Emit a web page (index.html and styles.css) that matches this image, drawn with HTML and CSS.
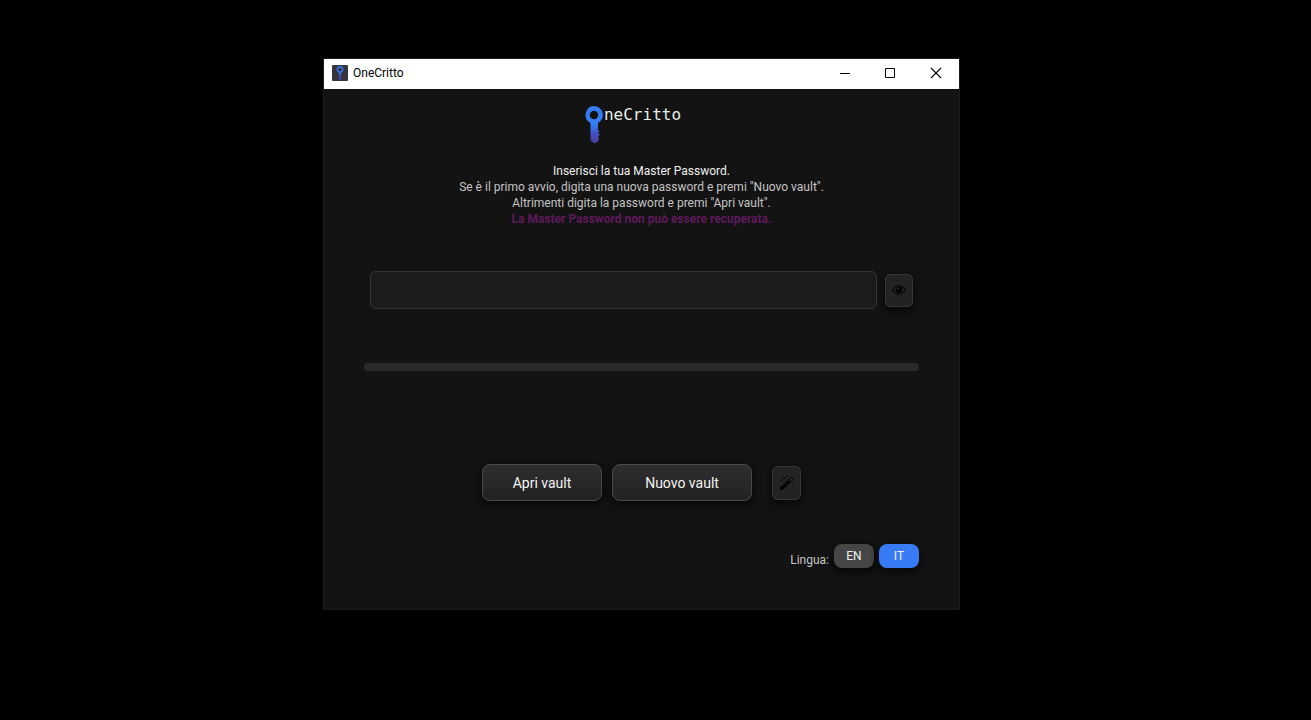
FILE: index.html
```html
<!DOCTYPE html>
<html lang="it">
<head>
    <meta charset="UTF-8">
    <meta name="viewport" content="width=device-width, initial-scale=1.0">
    <title>OneCritto</title>
    <link rel="stylesheet" href="styles.css">
</head>
<body>
    <div class="window">
        <!-- title bar -->
        <header class="titlebar">
            <svg class="app-icon" viewBox="0 0 16 16" width="16" height="16">
                <rect width="16" height="16" rx="1" fill="#333539"/>
                <circle cx="8" cy="4.5" r="2.6" fill="none" stroke="#2f6fec" stroke-width="1.6"/>
                <path d="M8 7v3" stroke="#2f6fec" stroke-width="2"/>
                <path d="M8 10v5M8 12.500h2" stroke="#4340a8" stroke-width="2"/>
            </svg>
            <span class="app-name">OneCritto</span>
            <button class="win-btn" type="button" aria-label="Riduci">
                <svg viewBox="0 0 12 12" width="12" height="12"><path d="M2 6.500h10" stroke="#000"/></svg>
            </button>
            <button class="win-btn" type="button" aria-label="Ingrandisci">
                <svg viewBox="0 0 12 12" width="12" height="12"><path d="M1.500 1.500h9v9h-9z" fill="none" stroke="#000"/></svg>
            </button>
            <button class="win-btn" type="button" aria-label="Chiudi">
                <svg viewBox="0 0 12 12" width="12" height="12"><path d="M1 1l10 10M11 1L1 11" stroke="#000" stroke-width="1.1"/></svg>
            </button>
        </header>

        <main class="content">
            <div class="logo">
                <svg viewBox="0 0 20 38" width="20" height="38">
                    <defs>
                        <linearGradient id="key" x1="0" y1="0" x2="0" y2="1">
                            <stop offset="0.5" stop-color="#377cf4"/>
                            <stop offset="0.75" stop-color="#4250c0"/>
                            <stop offset="1" stop-color="#4a3a9c"/>
                        </linearGradient>
                    </defs>
                    <path fill="url(#key)" fill-rule="evenodd" d="M10 0a9 9 0 0 1 4 17v7l1.500 1.500-1.500 1.500 2 1.500-2 2.500 1 2-1 2.500-3.500 2-4-3V17A9 9 0 0 1 10 0zM10 4.800a4.200 4.200 0 1 0 0 8.400a4.200 4.200 0 0 0 0-8.400z"/>
                </svg>
                <span>neCritto</span>
            </div>

            <div class="intro">
                <p class="lead">Inserisci la tua Master Password.</p>
                <p>Se è il primo avvio, digita una nuova password e premi "Nuovo vault".</p>
                <p>Altrimenti digita la password e premi "Apri vault".</p>
                <p class="warning">La Master Password non può essere recuperata.</p>
            </div>

            <div class="password-row">
                <input class="password" type="password" aria-label="Master Password">
                <button class="icon-btn" type="button" aria-label="Mostra password">
                    <svg viewBox="0 0 14 10" width="14" height="10">
                        <path d="M.5 5Q7-3.500 13.500 5Q7 13.500.5 5z" fill="none" stroke="#050505" stroke-width="1.200"/>
                        <circle cx="7" cy="4.800" r="3.200" fill="#050505"/>
                        <circle cx="6" cy="3.500" r=".9" fill="#333"/>
                    </svg>
                </button>
            </div>

            <div class="strength"></div>

            <div class="actions">
                <button class="btn open" type="button">Apri vault</button>
                <button class="btn new" type="button">Nuovo vault</button>
                <button class="icon-btn wand" type="button" aria-label="Genera password">
                    <svg viewBox="0 0 16 16" width="16" height="16">
                        <path d="M2.500 13.500L13 4" stroke="#050505" stroke-width="3.400" stroke-linecap="round"/>
                        <path d="M11 5.800l2-1.800" stroke="#333" stroke-width="1.200" stroke-linecap="round"/>
                        <path d="M5 1l.6 1.400L7 3l-1.400.6L5 5l-.6-1.400L3 3l1.400-.6zM2 4l.4.8.8.4-.8.4-.4.8-.4-.8-.8-.4.8-.4zM8.500 0l.4.8.8.4-.8.4-.4.8-.4-.8-.8-.4.8-.4zM14 8l.4.8.8.4-.8.4-.4.8-.4-.8-.8-.4.8-.4z" fill="#050505"/>
                    </svg>
                </button>
            </div>

            <div class="language">
                <span class="language-label">Lingua:</span>
                <button class="lang" type="button">EN</button>
                <button class="lang active" type="button">IT</button>
            </div>
        </main>
    </div>
</body>
</html>
```
FILE: styles.css
```css
*{
    box-sizing: border-box;
}
body{
    margin: 0;
    padding: 58px 28px 58px 0;
    background-color: #000;
    font-family: Roboto, "Noto Sans", sans-serif;
    font-size: 12px;
    line-height: 16px;
}
button{
    padding: 0;
    border: 0;
    font: inherit;
    color: inherit;
}
.window{
    width: 100%;
    max-width: 637px;
    margin: 0 auto;
    border: 1px solid #1c1c1c;
    background-color: #131313;
    color: #c4c4c4;
}
/* title bar */
.titlebar{
    display: flex;
    align-items: center;
    height: 30px;
    padding: 0 0 2px 8px;
    background-color: #fff;
    color: #000;
}
.app-name{
    flex: 1;
    margin-left: 5px;
}
.win-btn{
    display: flex;
    align-items: center;
    justify-content: center;
    width: 46px;
    height: 28px;
    background: none;
}
/* content */
.content{
    padding: 17px 40px 41px;
}
.logo{
    display: flex;
    justify-content: center;
    height: 38px;
    padding-right: 18px;
    color: #e8efe8;
    font-family: "DejaVu Sans Mono", monospace;
    font-size: 16px;
    line-height: 18px;
}
.intro{
    margin-top: 19px;
    text-align: center;
}
.intro p{
    margin: 0;
}
.intro .lead{
    color: #f0f0f0;
}
.intro .warning{
    color: #5e1a5c;
    font-weight: bold;
}
.password-row{
    display: flex;
    align-items: center;
    gap: 8px;
    margin-top: 44px;
    padding: 0 6px;
}
.password{
    flex: 1;
    min-width: 0;
    height: 38px;
    padding: 0 12px;
    border: 1px solid #363636;
    border-radius: 6px;
    background-color: #1c1c1c;
    color: #f0f0f0;
    font: inherit;
}
.icon-btn{
    display: flex;
    align-items: center;
    justify-content: center;
    width: 28px;
    height: 33px;
    border: 1px solid #363636;
    border-radius: 5px;
    background-color: #232323;
    box-shadow: 0 3px 6px 2px #0a0a0a;
}
.strength{
    height: 8px;
    margin-top: 54px;
    border-radius: 4px;
    background-color: #2a2a2a;
}
.actions{
    display: flex;
    align-items: center;
    justify-content: center;
    gap: 10px;
    margin-top: 93px;
}
.btn{
    height: 37px;
    border: 1px solid #4a4a4a;
    border-radius: 8px;
    background: linear-gradient(#2e2e2e, #222);
    box-shadow: 0 3px 6px 2px #0a0a0a;
    color: #f4f4f4;
    font-size: 14px;
}
.open{
    width: 120px;
}
.new{
    width: 140px;
}
.wand{
    width: 29px;
    height: 34px;
    margin-left: 10px;
}
.language{
    display: flex;
    align-items: center;
    justify-content: flex-end;
    gap: 5px;
    margin-top: 43px;
}
.language-label{
    padding-top: 8px;
}
.lang{
    width: 40px;
    height: 24px;
    border-radius: 8px;
    background-color: #464646;
    box-shadow: 0 3px 6px 2px #0a0a0a;
    color: #f0f0f0;
}
.lang.active{
    background-color: #377cf4;
}
```
